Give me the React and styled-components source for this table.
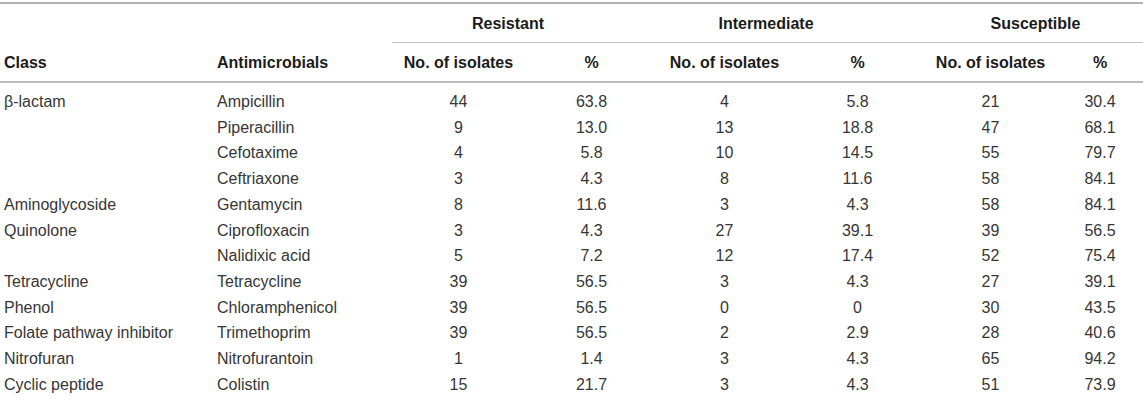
import React from 'react';
import styled, { createGlobalStyle } from 'styled-components';

const GlobalStyle = createGlobalStyle`
    body {
        margin: 0;
        background: #ffffff;
        font-family: "Liberation Sans", Arial, Helvetica, sans-serif;
    }
`;

const rows = [
    ['β-lactam', 'Ampicillin', '44', '63.8', '4', '5.8', '21', '30.4'],
    ['', 'Piperacillin', '9', '13.0', '13', '18.8', '47', '68.1'],
    ['', 'Cefotaxime', '4', '5.8', '10', '14.5', '55', '79.7'],
    ['', 'Ceftriaxone', '3', '4.3', '8', '11.6', '58', '84.1'],
    ['Aminoglycoside', 'Gentamycin', '8', '11.6', '3', '4.3', '58', '84.1'],
    ['Quinolone', 'Ciprofloxacin', '3', '4.3', '27', '39.1', '39', '56.5'],
    ['', 'Nalidixic acid', '5', '7.2', '12', '17.4', '52', '75.4'],
    ['Tetracycline', 'Tetracycline', '39', '56.5', '3', '4.3', '27', '39.1'],
    ['Phenol', 'Chloramphenicol', '39', '56.5', '0', '0', '30', '43.5'],
    ['Folate pathway inhibitor', 'Trimethoprim', '39', '56.5', '2', '2.9', '28', '40.6'],
    ['Nitrofuran', 'Nitrofurantoin', '1', '1.4', '3', '4.3', '65', '94.2'],
    ['Cyclic peptide', 'Colistin', '15', '21.7', '3', '4.3', '51', '73.9'],
];

const groups = [
    { label: 'Resistant', shift: -17 },
    { label: 'Intermediate', shift: -25 },
    { label: 'Susceptible', shift: 2 },
];

const Wrapper = styled.div`
    padding-top: 2px;
`;

const Table = styled.table`
    width: 1143px;
    table-layout: fixed;
    border-collapse: separate;
    border-spacing: 0;
    border-top: 2px solid #b4b4b4;
    font-size: 16px;
`;

const GroupCell = styled.th`
    height: 36px;
    padding: 2px 0 0;
    text-align: center;
    vertical-align: middle;
    font-weight: bold;
    color: #1b1b1b;
    border-bottom: 1px solid #c4c4c4;

    span {
        position: relative;
        left: ${(props) => props.$shift}px;
    }
`;

const BlankCell = styled.th`
    height: 36px;
    padding: 0;
`;

const HeadCell = styled.th`
    height: 37px;
    padding: 1px 0 0 ${(props) => (props.$left ? '4px' : '0')};
    text-align: ${(props) => (props.$left ? 'left' : 'center')};
    vertical-align: middle;
    font-weight: bold;
    color: #1b1b1b;
    border-bottom: 2px solid #bcbcbc;
`;

const Row = styled.tr`
    &:first-child td {
        padding-top: 6px;
    }
`;

const Cell = styled.td`
    padding: 0 0 0 ${(props) => (props.$left ? '4px' : '0')};
    line-height: 25.7px;
    text-align: ${(props) => (props.$left ? 'left' : 'center')};
    color: #363636;
    white-space: nowrap;
`;

const Col = styled.col`
    width: ${(props) => props.$width}px;
`;

const App = () => {
    return (
        <Wrapper>
            <GlobalStyle />
            <Table>
                <colgroup>
                    <Col $width={213} />
                    <Col $width={179} />
                    <Col $width={133} />
                    <Col $width={133} />
                    <Col $width={133} />
                    <Col $width={133} />
                    <Col $width={133} />
                    <Col $width={86} />
                </colgroup>
                <thead>
                    <tr>
                        <BlankCell />
                        <BlankCell />
                        {groups.map((g) => (
                            <GroupCell key={g.label} colSpan={2} $shift={g.shift}>
                                <span>{g.label}</span>
                            </GroupCell>
                        ))}
                    </tr>
                    <tr>
                        <HeadCell $left>Class</HeadCell>
                        <HeadCell $left>Antimicrobials</HeadCell>
                        <HeadCell>No. of isolates</HeadCell>
                        <HeadCell>%</HeadCell>
                        <HeadCell>No. of isolates</HeadCell>
                        <HeadCell>%</HeadCell>
                        <HeadCell>No. of isolates</HeadCell>
                        <HeadCell>%</HeadCell>
                    </tr>
                </thead>
                <tbody>
                    {rows.map((row, index) => (
                        <Row key={index}>
                            {row.map((value, i) => (
                                <Cell key={i} $left={i < 2}>
                                    {value}
                                </Cell>
                            ))}
                        </Row>
                    ))}
                </tbody>
            </Table>
        </Wrapper>
    );
};

export default App;
